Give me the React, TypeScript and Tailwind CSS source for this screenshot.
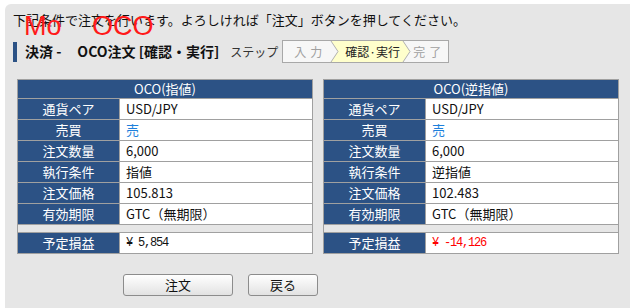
import React from 'react';

type Row = { label: string; value: string; tone?: 'sell' };

const FONT = "font-['Noto_Sans_CJK_JP','Liberation_Sans',sans-serif]";

const OrderTable: React.FC<{ title: string; rows: Row[]; pnl: string; loss?: boolean }> = ({ title, rows, pnl, loss }) => (
  <div className="w-[296px] border border-[#a0a0a0] bg-white text-[13px]">
    <div className="h-[18px] bg-[#2c5285] text-center leading-[18px] text-white">{title}</div>
    {rows.map((r) => (
      <div key={r.label} className="flex h-[21px] border-t border-[#a0a0a0] leading-[20px]">
        <div className="w-[102px] shrink-0 border-r border-[#a0a0a0] bg-[#2c5285] text-center text-white">{r.label}</div>
        <div className={`pl-[6px] ${r.tone === 'sell' ? 'text-[#1e80dc]' : 'text-[#111]'}`}>{r.value}</div>
      </div>
    ))}
    <div className="h-[8px] border-t border-[#a0a0a0] bg-[#e6e6e6]" />
    <div className="flex h-[21px] border-t border-[#a0a0a0] leading-[20px]">
      <div className="w-[102px] shrink-0 border-r border-[#a0a0a0] bg-[#2c5285] text-center text-white">予定損益</div>
      <div
        className={`pl-[6px] font-['Liberation_Mono',monospace] text-[12px] tracking-[-1.2px] ${loss ? 'text-[#ff0000]' : 'text-[#111]'}`}
      >
        {pnl}
      </div>
    </div>
  </div>
);

const StepBar: React.FC = () => (
  <div className="relative h-[23px] w-[167px] border border-[#a8a8a8] bg-[#f7f7f7] text-[12px] leading-[21px]">
    <svg className="absolute inset-0" width="165" height="21" viewBox="0 0 165 21">
      <polygon points="48,0 120,0 127,10.5 120,21 48,21 55,10.5" fill="#ffffcc" />
      <polyline points="48,0 55,10.5 48,21" fill="none" stroke="#b0b0b0" strokeWidth="1" />
      <polyline points="120,0 127,10.5 120,21" fill="none" stroke="#b0b0b0" strokeWidth="1" />
    </svg>
    <div className="relative flex h-full">
      <span className="w-[48px] pl-[11px] text-[#a0a0a0] tracking-[4px]">入力</span>
      <span className="w-[72px] pl-[14px] text-[#222]">確認·実行</span>
      <span className="pl-[10px] text-[#a0a0a0] tracking-[4px]">完了</span>
    </div>
  </div>
);

const Button: React.FC<{ label: string; w: string }> = ({ label, w }) => (
  <button
    className={`${w} h-[22px] rounded-[3px] border border-[#8c8c8c] bg-linear-to-b from-white to-[#e2e2e2] text-[13px] leading-[20px] text-[#111]`}
  >
    {label}
  </button>
);

const App: React.FC = () => {
  const left: Row[] = [
    { label: '通貨ペア', value: 'USD/JPY' },
    { label: '売買', value: '売', tone: 'sell' },
    { label: '注文数量', value: '6,000' },
    { label: '執行条件', value: '指値' },
    { label: '注文価格', value: '105.813' },
    { label: '有効期限', value: 'GTC（無期限）' },
  ];
  const right: Row[] = [
    { label: '通貨ペア', value: 'USD/JPY' },
    { label: '売買', value: '売', tone: 'sell' },
    { label: '注文数量', value: '6,000' },
    { label: '執行条件', value: '逆指値' },
    { label: '注文価格', value: '102.483' },
    { label: '有効期限', value: 'GTC（無期限）' },
  ];

  return (
    <div className={`relative h-[308px] w-[631px] overflow-hidden bg-white ${FONT}`}>
      <div className="ml-[5px] mt-[4px] h-[320px] w-[625px] rounded-tl-[6px] bg-[#e6e6e6] pt-[8px]">
        <p className="pl-[8px] text-[13px] leading-[16px] text-[#111]">
          下記条件で注文を行います。よろしければ「注文」ボタンを押してください。
        </p>

        <div className="mt-[12px] flex h-[23px] items-center pl-[8px]">
          <div className="h-[20px] w-[4px] bg-[#2c5285]" />
          <div className="ml-[8px] text-[14px] font-bold text-[#111]">決済 -</div>
          <div className="ml-[16px] text-[14px] font-bold text-[#111]">OCO注文 [確認・実行]</div>
          <div className="ml-[11px] text-[12px] text-[#333]">ステップ</div>
          <div className="ml-[4px]">
            <StepBar />
          </div>
        </div>

        <div className="ml-[12px] mt-[16px] flex gap-[10px]">
          <OrderTable title="OCO(指値)" rows={left} pnl="¥ 5,854" />
          <OrderTable title="OCO(逆指値)" rows={right} pnl="¥ -14,126" loss />
        </div>

        <div className="ml-[118px] mt-[20px] flex gap-[15px]">
          <Button label="注文" w="w-[110px]" />
          <Button label="戻る" w="w-[70px]" />
        </div>
      </div>

      <span className="absolute left-[24px] top-[13px] font-['Liberation_Sans',sans-serif] text-[27px] leading-[27px] text-[#ff1a1a]">
        Mo
      </span>
      <span className="absolute left-[92px] top-[13px] font-['Liberation_Sans',sans-serif] text-[27px] leading-[27px] text-[#ff1a1a]">
        OCO
      </span>
    </div>
  );
};

export default App;
